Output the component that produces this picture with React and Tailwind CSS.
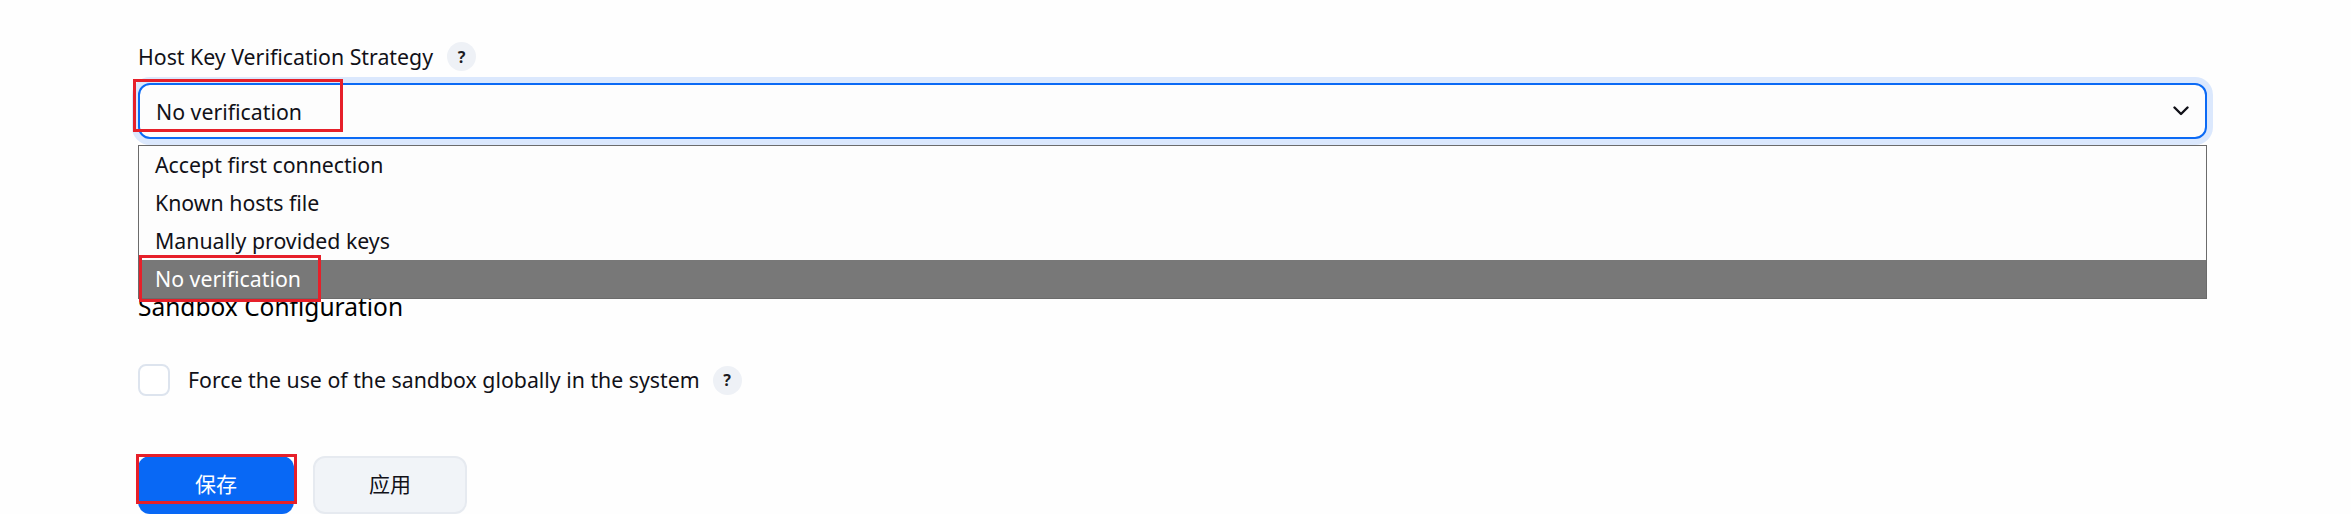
import React from 'react'

const HelpIcon = () => (
    <span className="flex h-[29px] w-[29px] items-center justify-center rounded-full bg-[#eef1f6] text-[16px] font-bold text-[#1b1b22]">
        ?
    </span>
)

const options = ['Accept first connection', 'Known hosts file', 'Manually provided keys', 'No verification']

const Mark = ({className}) => (
    <div className={`pointer-events-none absolute z-20 border-[3px] border-[#e6202a] ${className}`} />
)

const App = () => {
    return (
        <div className="relative h-[514px] w-full overflow-hidden bg-[#fefefe] pl-[138px] pr-[144px] pt-[42px] font-['Noto_Sans','Noto_Sans_CJK_SC',sans-serif] text-[#111118]">
            <div className="flex h-[29px] items-center gap-[14px]">
                <span className="text-[21.3px]">Host Key Verification Strategy</span>
                <HelpIcon />
            </div>

            <div className="relative mt-[12px]">
                <div className="flex h-[56px] items-center justify-between rounded-[12px] border-2 border-[#0b6af5] bg-[#fdfdfd] pl-[16px] pr-[16px] shadow-[0_0_0_6px_#dbe8fd]">
                    <span className="pt-[2px] text-[21.3px]">No verification</span>
                    <svg width="16" height="10" viewBox="0 0 16 10" fill="none">
                        <path d="M1.5 1.5 L8 8 L14.5 1.5" stroke="#111118" strokeWidth="2.4" strokeLinecap="round" strokeLinejoin="round" />
                    </svg>
                </div>
                <ul className="absolute left-0 right-0 top-[62px] z-10 border border-[#6b6b6b] bg-[#fdfdfd]">
                    {options.map((o) => (
                        <li
                            key={o}
                            className={`flex h-[38px] items-center pl-[16px] text-[21.3px] ${o === 'No verification' ? 'bg-[#787878] text-white' : ''}`}
                        >
                            {o}
                        </li>
                    ))}
                </ul>
            </div>

            <h2 className="mt-[152px] text-[24.5px] leading-[32px] text-black">Sandbox Configuration</h2>

            <div className="mt-[41px] flex items-center">
                <span className="h-[32px] w-[32px] rounded-[8px] border-2 border-[#dde4ee] bg-white" />
                <span className="ml-[18px] text-[21.3px]">Force the use of the sandbox globally in the system</span>
                <span className="ml-[13px]">
                    <HelpIcon />
                </span>
            </div>

            <div className="mt-[60px] flex gap-[19px]">
                <button className="h-[58px] w-[156px] rounded-[12px] bg-[#0868f5] text-[21px] text-white">保存</button>
                <button className="h-[58px] w-[154px] rounded-[12px] border-2 border-[#e6eaf0] bg-[#f1f4f8] text-[21px]">应用</button>
            </div>

            <Mark className="left-[133px] top-[79px] h-[53px] w-[210px]" />
            <Mark className="left-[139px] top-[255px] h-[47px] w-[182px]" />
            <Mark className="left-[136px] top-[454px] h-[50px] w-[161px]" />
        </div>
    )
}

export default App
